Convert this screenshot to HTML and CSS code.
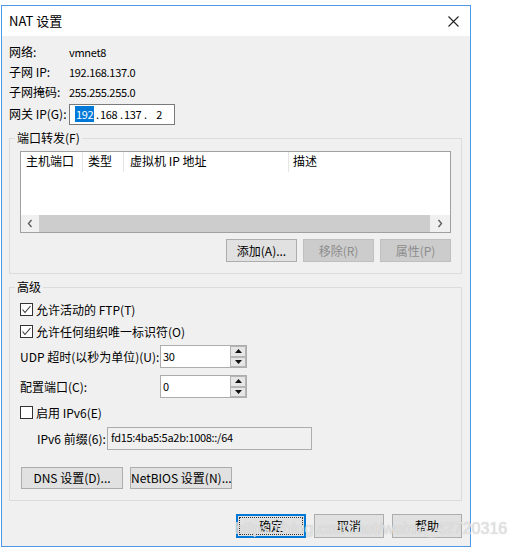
FILE: index.html
```html
<!DOCTYPE html>
<html>
<head>
<meta charset="utf-8">
<link rel="stylesheet" href="styles.css">
</head>
<body>
<div class="window">
  <div class="titlebar">
    <span class="title">NAT 设置</span>
    <svg class="close" width="11" height="11" viewBox="0 0 11 11"><path d="M0.5 0.5 L10.5 10.5 M10.5 0.5 L0.5 10.5" stroke="#222" stroke-width="1.1" fill="none"/></svg>
  </div>
  <div class="content">
    <div class="info">
      <div class="row"><span class="lbl">网络:</span><span class="val">vmnet8</span></div>
      <div class="row"><span class="lbl">子网 IP:</span><span class="val">192.168.137.0</span></div>
      <div class="row"><span class="lbl">子网掩码:</span><span class="val">255.255.255.0</span></div>
      <div class="row gw"><span class="lbl">网关 IP(G):</span>
        <div class="ipbox">
          <span class="ipf"><span class="sel">192</span></span><span class="ipd">.</span><span class="ipf">168</span><span class="ipd">.</span><span class="ipf">137</span><span class="ipd">.</span><span class="ipf last">2</span>
        </div>
      </div>
    </div>

    <fieldset class="group g1">
      <legend>端口转发(F)</legend>
      <div class="ginner g1in">
        <div class="listview">
          <div class="lv-head">
            <div class="col c1">主机端口</div>
            <div class="col c2">类型</div>
            <div class="col c3">虚拟机 IP 地址</div>
            <div class="col c4">描述</div>
          </div>
          <div class="lv-body"></div>
          <div class="hscroll">
            <div class="arr"><svg width="6" height="9" viewBox="0 0 6 9"><path d="M4.5 1 L1.5 4.5 L4.5 8" stroke="#606060" stroke-width="1.4" fill="none"/></svg></div>
            <div class="thumb"></div>
            <div class="arr"><svg width="6" height="9" viewBox="0 0 6 9"><path d="M1.5 1 L4.5 4.5 L1.5 8" stroke="#606060" stroke-width="1.4" fill="none"/></svg></div>
          </div>
        </div>
        <div class="btnrow">
          <button class="btn w71">添加(A)...</button>
          <button class="btn w71 disabled">移除(R)</button>
          <button class="btn w71 disabled">属性(P)</button>
        </div>
      </div>
    </fieldset>

    <fieldset class="group g2">
      <legend>高级</legend>
      <div class="ginner g2in">
        <div class="chkrow"><span class="chk"><svg width="11" height="11" viewBox="0 0 11 11"><path d="M1.5 5.5 L4 8.5 L9.5 2" stroke="#333" stroke-width="1.1" fill="none"/></svg></span><span>允许活动的 FTP(T)</span></div>
        <div class="chkrow"><span class="chk"><svg width="11" height="11" viewBox="0 0 11 11"><path d="M1.5 5.5 L4 8.5 L9.5 2" stroke="#333" stroke-width="1.1" fill="none"/></svg></span><span>允许任何组织唯一标识符(O)</span></div>
        <div class="fieldrow udp">
          <span class="flbl">UDP 超时(以秒为单位)(U):</span>
          <div class="spin">
            <div class="spin-text">30</div>
            <div class="spin-btns">
              <div class="sbtn"><svg width="7" height="4" viewBox="0 0 7 4"><path d="M0 4 L3.5 0 L7 4 Z" fill="#111"/></svg></div>
              <div class="sbtn"><svg width="7" height="4" viewBox="0 0 7 4"><path d="M0 0 L3.5 4 L7 0 Z" fill="#111"/></svg></div>
            </div>
          </div>
        </div>
        <div class="fieldrow port">
          <span class="flbl">配置端口(C):</span>
          <div class="spin">
            <div class="spin-text">0</div>
            <div class="spin-btns">
              <div class="sbtn"><svg width="7" height="4" viewBox="0 0 7 4"><path d="M0 4 L3.5 0 L7 4 Z" fill="#111"/></svg></div>
              <div class="sbtn"><svg width="7" height="4" viewBox="0 0 7 4"><path d="M0 0 L3.5 4 L7 0 Z" fill="#111"/></svg></div>
            </div>
          </div>
        </div>
        <div class="chkrow ipv6"><span class="chk"></span><span>启用 IPv6(E)</span></div>
        <div class="prefixrow">
          <span class="plbl">IPv6 前缀(6):</span>
          <div class="prefix">fd15:4ba5:5a2b:1008::/64</div>
        </div>
        <div class="dnsrow">
          <button class="btn w102">DNS 设置(D)...</button>
          <button class="btn w102">NetBIOS 设置(N)...</button>
        </div>
      </div>
    </fieldset>

    <div class="footer">
      <button class="btn fbtn default">确定</button>
      <button class="btn fbtn">取消</button>
      <button class="btn fbtn">帮助</button>
    </div>
  </div>
</div>
<div class="watermark">https://blog.csdn.net/weixin_42720316</div>
</body>
</html>
```

FILE: styles.css
```css
* { box-sizing: border-box; }
html, body { margin: 0; padding: 0; background: #fff; }
body {
  font-family: "Noto Sans CJK SC", sans-serif;
  font-size: 12px;
  color: #000;
  width: 516px;
  height: 555px;
  position: relative;
  overflow: hidden;
}
.window {
  margin: 5px 0 0 1px;
  width: 470px;
  height: 542px;
  border: 1px solid #4c9ae6;
  background: #f0f0f0;
  display: flex;
  flex-direction: column;
}
.titlebar {
  height: 30px;
  flex: none;
  background: #fff;
  display: flex;
  align-items: center;
  justify-content: space-between;
  padding: 0 11px 0 7px;
}
.title { font-size: 13px; line-height: 16px; }
.close { display: block; }

.content { padding: 6px 8px 0 7px; }
.row { display: flex; align-items: center; height: 20px; line-height: 20px; }
.lbl { width: 60px; flex: none; white-space: nowrap; }
.val, .ipbox, .spin-text, .prefix { font-size: 11px; letter-spacing: -0.3px; }
.row.gw { height: 22px; margin-top: 1px; }
.ipbox {
  width: 106px;
  height: 21px;
  border: 1px solid #7a7a7a;
  background: #fff;
  display: flex;
  align-items: center;
  padding-left: 5px;
  line-height: 15px;
}
.ipf { width: 21px; text-align: left; padding-left: 1px; }
.ipf.last { text-align: right; padding-right: 6px; }
.ipd { width: 3px; text-align: left; }
.sel { background: #0078d7; color: #fff; padding: 0 1px; margin-left: -1px; }

fieldset.group {
  margin: 5px 0 0;
  padding: 0;
  border: 1px solid #dcdcdc;
  min-width: 0;
}
legend {
  margin-left: 5px;
  padding: 0 2px;
  line-height: 16px;
}
.g1in { padding: 5px 10px 11px; }
.listview {
  height: 82px;
  border: 1px solid #a0a0a0;
  background: #fff;
  display: flex;
  flex-direction: column;
}
.lv-head { height: 20px; display: flex; flex: none; line-height: 18px; }
.col { border-right: 1px solid #e5e5e5; padding-left: 5px; white-space: nowrap; }
.c1 { width: 62px; }
.c2 { width: 41px; }
.c3 { width: 165px; padding-left: 6px; }
.c4 { flex: 1; border-right: none; padding-left: 4px; }
.lv-body { flex: 1; }
.hscroll {
  height: 17px;
  flex: none;
  display: grid;
  grid-template-columns: 18px 1fr 20px;
  background: #f0f0f0;
}
.arr { display: flex; align-items: center; justify-content: center; }
.thumb { background: #cdcdcd; }

.btnrow { display: flex; justify-content: flex-end; gap: 6px; margin-top: 6px; }
.btn {
  font-family: inherit;
  font-size: 12px;
  color: #000;
  background: #e1e1e1;
  border: 1px solid #adadad;
  padding: 0;
  margin: 0;
  line-height: 16px;
  text-align: center;
  white-space: nowrap;
}
.w71 { width: 71px; height: 23px; }
.btn.disabled { background: #cccccc; border-color: #bfbfbf; color: #8d8d8d; }

.g2in { padding: 3px 10px 11px; }
.chkrow { display: flex; align-items: center; height: 22px; }
.chk {
  width: 13px;
  height: 13px;
  border: 1px solid #333;
  background: #fff;
  margin-right: 3px;
  display: flex;
  align-items: center;
  justify-content: center;
}
.chk svg { display: block; }
.fieldrow { display: flex; align-items: center; height: 23px; }
.fieldrow.udp { margin-top: 3px; }
.fieldrow.port { margin-top: 7px; }
.flbl { width: 140px; flex: none; white-space: nowrap; }
.spin {
  width: 87px;
  height: 23px;
  border: 1px solid #adadad;
  background: #fff;
  display: flex;
}
.spin-text { flex: 1; padding: 2px 0 0 2px; line-height: 16px; }
.spin-btns { width: 17px; display: flex; flex-direction: column; padding: 0 0 0 1px; }
.sbtn {
  flex: 1;
  background: #e6e6e6;
  border: 1px solid #b5b5b5;
  display: flex;
  align-items: center;
  justify-content: center;
}
.sbtn svg { display: block; }
.chkrow.ipv6 { margin-top: 3px; }
.prefixrow { display: flex; align-items: center; height: 23px; margin-top: 4px; padding-left: 17px; }
.plbl { width: 70px; flex: none; white-space: nowrap; }
.prefix {
  width: 205px;
  height: 23px;
  border: 1px solid #adadad;
  background: #f0f0f0;
  padding: 1px 0 0 3px;
  line-height: 16px;
}
.dnsrow { display: flex; gap: 7px; margin: 17px 0 0 1px; }
.w102 { width: 102px; height: 22px; }

.footer { display: flex; justify-content: flex-end; gap: 8px; margin-top: 13px; }
.fbtn { width: 70px; height: 24px; }
.fbtn.default {
  border-color: #0078d7;
  box-shadow: inset 0 0 0 1px #0078d7;
  outline: 1px dotted #333;
  outline-offset: -4px;
}

.watermark {
  position: absolute;
  left: 235px;
  top: 521px;
  font-family: "Liberation Sans", sans-serif;
  font-size: 16px;
  line-height: 16px;
  color: #e2e2e2;
  text-shadow: 0 0 1px rgba(140, 140, 140, 0.45);
  white-space: nowrap;
}
```
